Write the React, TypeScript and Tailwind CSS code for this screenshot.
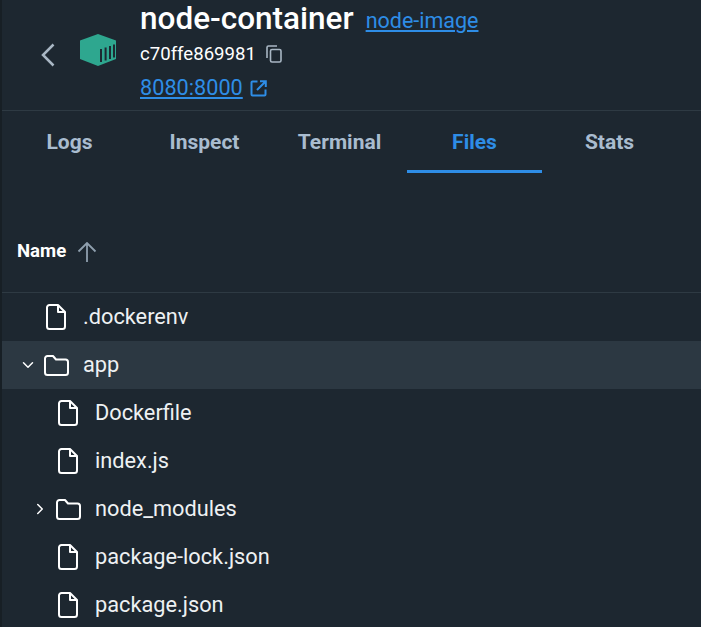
import { ChevronDown, ChevronRight } from "lucide-react";

type Row = {
  name: string;
  kind: "file" | "folder";
  depth: number;
  open?: boolean;
  active?: boolean;
};

const rows: Row[] = [
  { name: ".dockerenv", kind: "file", depth: 0 },
  { name: "app", kind: "folder", depth: 0, open: true, active: true },
  { name: "Dockerfile", kind: "file", depth: 1 },
  { name: "index.js", kind: "file", depth: 1 },
  { name: "node_modules", kind: "folder", depth: 1 },
  { name: "package-lock.json", kind: "file", depth: 1 },
  { name: "package.json", kind: "file", depth: 1 },
];

const tabs = ["Logs", "Inspect", "Terminal", "Files", "Stats"];

function FileIcon() {
  return (
    <svg width="20" height="26" viewBox="0 0 20 26" fill="none" stroke="white" strokeWidth="2" strokeLinejoin="round">
      <path d="M1 3.500A2.500 2.500 0 0 1 3.500 1H12L19 8V22.500A2.500 2.500 0 0 1 16.500 25H3.500A2.500 2.500 0 0 1 1 22.500Z" />
      <path d="M12 1V8H19" />
    </svg>
  );
}

function FolderIcon() {
  return (
    <svg width="25" height="21" viewBox="0 0 25 21" fill="none" stroke="white" strokeWidth="2" strokeLinejoin="round">
      <path d="M1 3.500A2.500 2.500 0 0 1 3.500 1H9L12 4.500H21.500A2.500 2.500 0 0 1 24 7V17.500A2.500 2.500 0 0 1 21.500 20H3.500A2.500 2.500 0 0 1 1 17.500Z" />
    </svg>
  );
}

function ContainerLogo() {
  return (
    <svg width="36" height="32" viewBox="0 0 36 32" className="block">
      <path d="M18 0L36 6.500V25L18 32L0 25V6.500Z" fill="#2ea78f" />
      <g fill="#1d2a32">
        <rect x="20" y="15" width="2" height="13" />
        <rect x="24.600" y="13.500" width="2" height="13" />
        <rect x="29" y="12" width="2" height="13" />
        <rect x="33" y="10.500" width="2" height="13" />
      </g>
    </svg>
  );
}

function BackIcon() {
  return (
    <svg width="14" height="24" viewBox="0 0 14 24" fill="none" stroke="#a9b7c4" strokeWidth="2.500" className="block">
      <path d="M12.500 1.500L2 12L12.500 22.500" />
    </svg>
  );
}

function CopyIcon() {
  return (
    <svg width="16" height="18" viewBox="0 0 16 18" fill="none" stroke="#a9b7c4" strokeWidth="1.600" className="block">
      <path d="M1 13V2.500A1.500 1.500 0 0 1 2.500 1H11" />
      <rect x="4.500" y="4.500" width="10.500" height="12.500" rx="1.500" />
    </svg>
  );
}

function OpenIcon() {
  return (
    <svg width="17" height="17" viewBox="0 0 17 17" fill="none" stroke="#2e8de6" strokeWidth="2" className="block">
      <path d="M7.500 1.500H2.500A1 1 0 0 0 1.500 2.500V14.500A1 1 0 0 0 2.500 15.500H14.500A1 1 0 0 0 15.500 14.500V9.500" />
      <path d="M10 1.200H15.800V7M15.800 1.200L7 10" />
    </svg>
  );
}

function ArrowIcon() {
  return (
    <svg width="20" height="20" viewBox="0 0 20 20" fill="none" stroke="#8f9fae" strokeWidth="1.800" className="block">
      <path d="M10 20V1M1.500 9.500L10 1L18.500 9.500" />
    </svg>
  );
}

export default function App() {
  return (
    <div className="h-[627px] w-[701px] overflow-hidden border-l-2 border-[#171f25] bg-[#1d2730] font-['Roboto',sans-serif] text-white">
      {/* Header */}
      <div className="flex h-[111px] items-center border-b border-[#2e3a43] pl-[39px]">
        <BackIcon />
        <div className="ml-[25px] mr-[24px] mt-[-10px]">
          <ContainerLogo />
        </div>
        <div className="flex h-full flex-col">
          <div className="flex h-[38px] items-center gap-[12px]">
            <span className="text-[31.500px] font-medium leading-none">node-container</span>
            <span className="pt-[4px] text-[21.500px] leading-none text-[#2e8de6] underline">node-image</span>
          </div>
          <div className="mt-[4px] flex items-center gap-[10px]">
            <span className="text-[18.600px] leading-[24px]">c70ffe869981</span>
            <CopyIcon />
          </div>
          <div className="mt-[10px] flex items-center gap-[7px]">
            <span className="text-[21.700px] leading-[24px] text-[#2e8de6] underline">8080:8000</span>
            <OpenIcon />
          </div>
        </div>
      </div>

      {/* Tabs */}
      <div className="flex h-[62px]">
        {tabs.map((tab) => (
          <div
            key={tab}
            className={`flex w-[135px] items-center justify-center border-b-[3px] pt-[4px] text-[21px] font-bold ${
              tab === "Files" ? "border-[#2e8de6] text-[#2e8de6]" : "border-transparent text-[#a9bccf]"
            }`}
          >
            {tab}
          </div>
        ))}
      </div>

      {/* Table header */}
      <div className="mt-[39px] flex h-[81px] items-center gap-[11px] border-b border-[#2e3a43] pl-[15px]">
        <span className="text-[18.600px] font-bold">Name</span>
        <ArrowIcon />
      </div>

      {/* Files */}
      {rows.map((row) => (
        <div
          key={row.name}
          className={`flex h-[48px] items-center ${row.active ? "bg-[#2c3842]" : ""}`}
        >
          <div className={`flex items-center ${row.depth === 1 ? "pl-[29px]" : "pl-[17px]"}`}>
            <div className="flex w-[18px] justify-center">
              {row.kind === "folder" &&
                (row.open ? (
                  <ChevronDown size={18} strokeWidth={2} />
                ) : (
                  <ChevronRight size={18} strokeWidth={2} />
                ))}
            </div>
            <div className="ml-[6px] flex w-[26px] justify-center">
              {row.kind === "file" ? <FileIcon /> : <FolderIcon />}
            </div>
          </div>
          <span className="ml-[14px] pt-[1px] text-[21.750px] text-[#eef1f3]">{row.name}</span>
        </div>
      ))}
    </div>
  );
}
